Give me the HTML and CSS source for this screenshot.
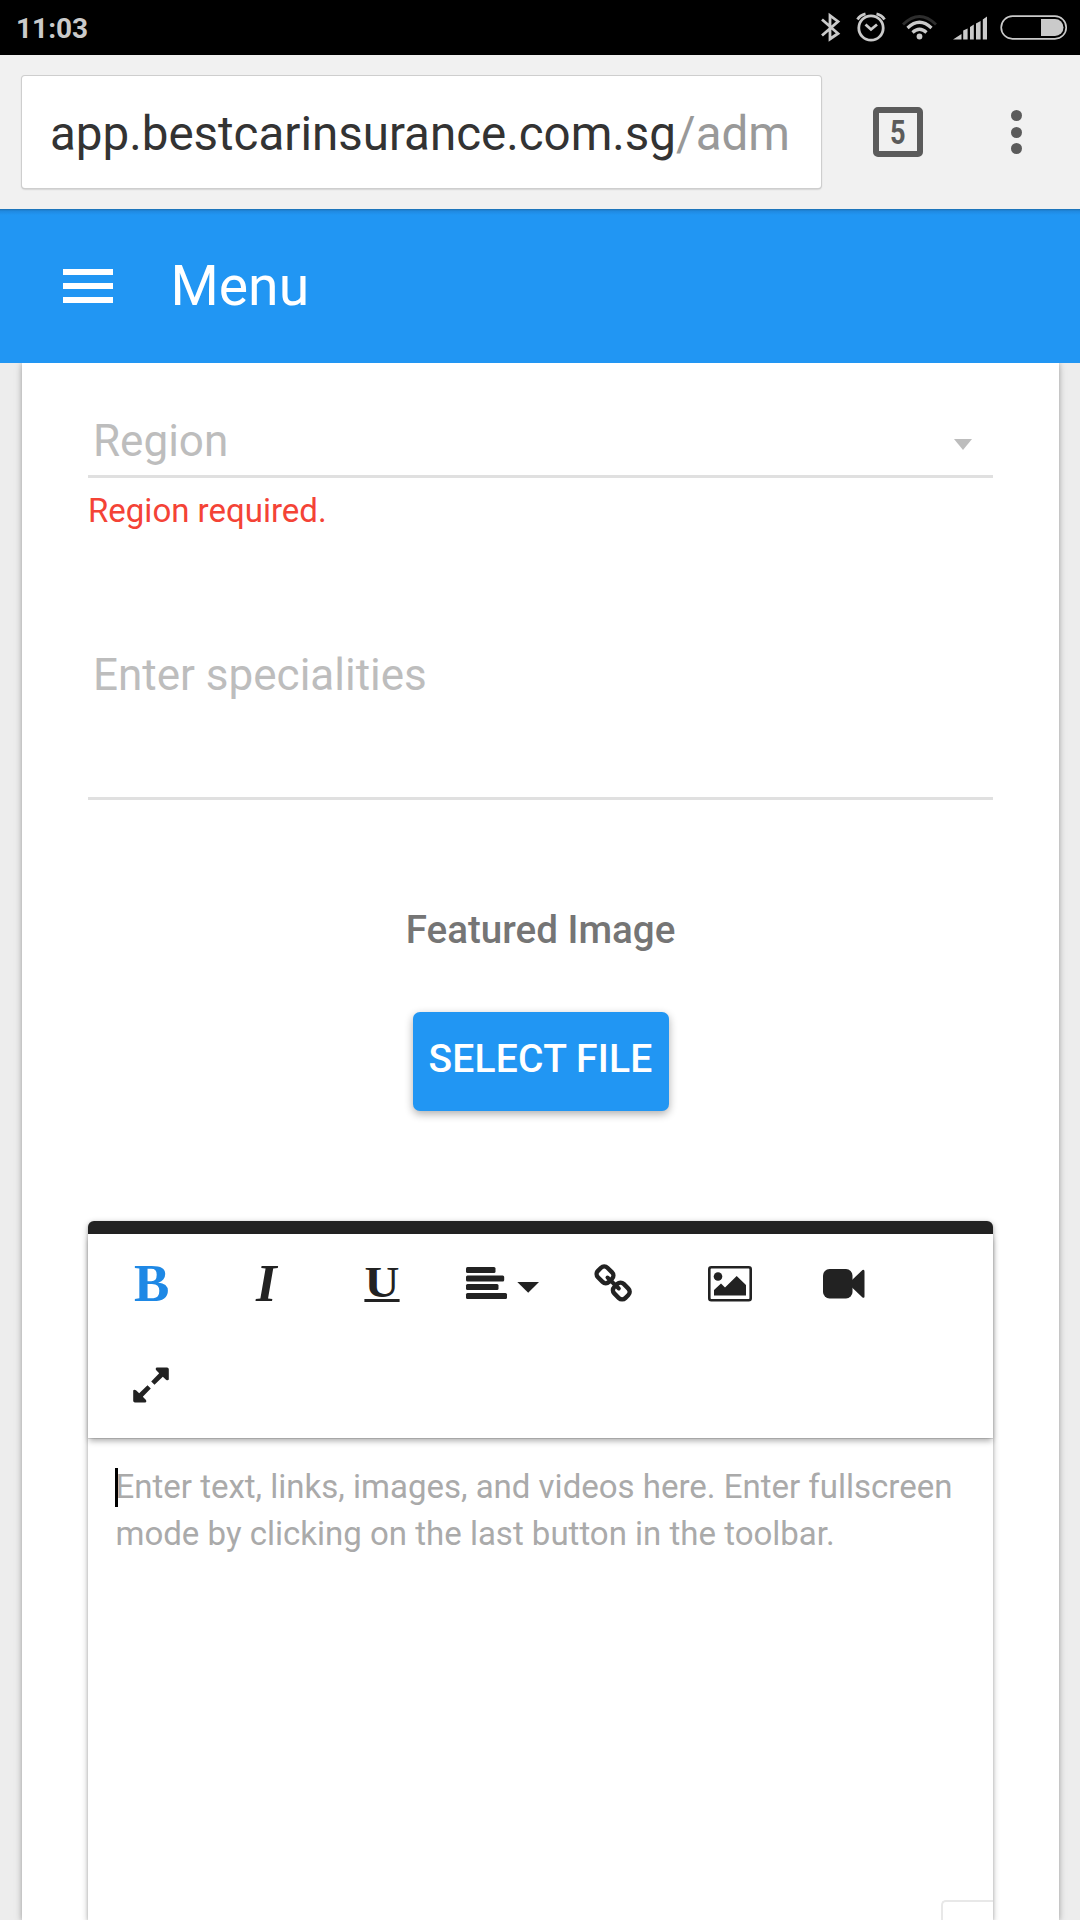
FILE: index.html
```html
<!DOCTYPE html>
<html lang="en">
<head>
<meta charset="utf-8">
<title>Menu</title>
<link rel="stylesheet" href="styles.css">
</head>
<body>
<div class="status">
  <span class="clock">11:03</span>
  <svg class="status-icons" width="260" height="55" viewBox="820 0 260 55" fill="none" stroke="#cacaca">
    <path stroke-width="2.800" d="M822 19.500L838 33.500L830 39V15.500L838 21.500L822 35.500"/>
    <circle cx="871" cy="28" r="12.200" stroke-width="2.800"/>
    <path stroke-width="2.800" d="M865.500 24.500L871 29.500L877 24.500M857.500 19.500Q860 15 865.500 13.800M876.500 13.800Q882 15 884.500 19.500"/>
    <path stroke="#2d2d2d" stroke-width="2.800" d="M903 24.500Q919.500 8.500 936 24.500"/>
    <path stroke-width="3.200" d="M907.500 28Q919.500 16.500 931.500 28M912.500 32.500Q919.500 26 926.500 32.500"/>
    <circle cx="919.500" cy="36.500" r="2.900" fill="#cacaca" stroke="none"/>
    <path fill="#cacaca" stroke="none" d="M953 39.500L961.500 34V39.500ZM963.200 30.500L967.600 28.500V39.500H963.200ZM970 27L973.800 24.500V39.500H970ZM976 23.500L980.600 21V39.500H976ZM982.800 19.500L987 16.500V39.500H982.800Z"/>
    <rect x="1001.200" y="16.200" width="65" height="22.600" rx="11.300" stroke-width="1.700"/>
    <path fill="#cacaca" stroke="none" d="M1041 19H1055A8.500 8.500 0 0 1 1055 36H1041Z"/>
  </svg>
</div>
<div class="browser">
  <div class="url"><span>app.bestcarinsurance.com.sg</span><span class="path">/adm</span></div>
  <div class="tabs"><span>5</span></div>
  <div class="dots"><i></i><i></i><i></i></div>
</div>
<header class="appbar">
  <div class="burger"><i></i><i></i><i></i></div>
  <h1>Menu</h1>
</header>
<main class="card">
  <div class="select"><span>Region</span><i class="caret"></i></div>
  <p class="error">Region required.</p>
  <div class="textarea">Enter specialities</div>
  <h2>Featured Image</h2>
  <button class="file">SELECT FILE</button>
  <section class="editor">
    <div class="toolbar">
      <span class="tool bold">B</span>
      <span class="tool italic">I</span>
      <span class="tool underline"><span>U</span></span>
      <span class="tool align"><svg width="76" height="36" viewBox="0 0 76 36"><g fill="#222"><rect x="2" y="1" width="29.500" height="6" rx="1.500"/><rect x="2" y="9.500" width="38.200" height="6" rx="1.500"/><rect x="2" y="18" width="32.500" height="6" rx="1.500"/><rect x="2" y="27" width="41" height="6" rx="1.500"/><path d="M53.300 16H75L64.200 26.800Z"/></g></svg></span>
      <span class="tool"><svg width="38" height="40" viewBox="594 1263 38 40" fill="none" stroke="#222"><rect x="-6.700" y="-7.800" width="13.400" height="15.600" rx="4.500" stroke-width="4.400" transform="translate(605 1273.800) rotate(-45)"/><rect x="-6.700" y="-7.800" width="13.400" height="15.600" rx="4.500" stroke-width="4.400" transform="translate(621.300 1290) rotate(-45)"/><path d="M607.500 1276.500L618.800 1287.500" stroke-width="4" stroke-linecap="round"/></svg></span>
      <span class="tool image"><svg width="44" height="36" viewBox="0 0 44 36"><rect x="1.300" y="1.300" width="41.400" height="33" rx="2" fill="none" stroke="#222" stroke-width="2.600"/><circle cx="10" cy="10.500" r="4.300" fill="#222"/><path fill="#222" d="M6 29.500V24L13 17.500L17 21.500L28.700 10L38 19V29.500Z"/></svg></span>
      <span class="tool"><svg width="42" height="30" viewBox="0 0 42 30" fill="#222"><rect width="29.500" height="29.500" rx="6.500"/><path d="M29 11L39.500 1Q41.500 0 41.500 2.500V27.500Q41.500 29.500 39.500 28.500L29 18.500Z"/></svg></span>
      <span class="tool"><svg width="36" height="36" viewBox="0 0 36 36" fill="#222"><path d="M23.500 .5H34Q35.800 .5 35.800 2.300V12.500Q35 14 33 12.800L29.800 9.800L21.500 17.800L18.200 14.500L26.200 6.300L23 3Q22 1.500 23.500 .5ZM12.500 35.500H2Q.2 35.500 .2 33.700V23.500Q1 22 3 23.200L6.200 26.200L14.500 18.200L17.800 21.500L9.800 29.700L13 33Q14 34.500 12.500 35.500Z"/></svg></span>
    </div>
    <div class="content"><i class="cursor"></i>Enter text, links, images, and videos here. Enter fullscreen mode by clicking on the last button in the toolbar.</div>
    <div class="counter"></div>
  </section>
</main>
</body>
</html>
```
FILE: styles.css
```css
* { box-sizing: border-box; margin: 0; padding: 0; }
html, body { width: 1080px; height: 1920px; overflow: hidden; }
body { background: #ededed; font-family: Roboto, sans-serif; display: flex; flex-direction: column; }

.status { height: 55px; flex: none; background: #000; display: flex; justify-content: space-between; padding-left: 16px; }
.clock { font-size: 28px; line-height: 57px; font-weight: 700; color: #cacaca; }

.browser { height: 154px; flex: none; background: #f1f1f1; padding: 21px 0 0 22px; display: flex; }
.url { width: 799px; height: 112px; background: #fff; border-radius: 3px; box-shadow: 0 0 0 1px #cecece, 0 1px 2px #999; padding-left: 28px; font-size: 47.5px; line-height: 116px; color: #333; white-space: nowrap; overflow: hidden; }
.path { color: #999; }
.tabs { width: 50px; height: 50px; margin: 31px 0 0 52px; border: 6px solid #5b5b5b; border-radius: 5px; color: #5b5b5b; text-align: center; font-size: 34px; font-weight: 700; line-height: 38px; }
.tabs span { display: inline-block; transform: scaleX(.8); }
.dots { margin: 34px 0 0 88px; display: flex; flex-direction: column; gap: 5.5px; }
.dots i { width: 11px; height: 11px; border-radius: 50%; background: #5b5b5b; }

.appbar { height: 154px; flex: none; background: linear-gradient(#1c6fb0 0, #2089e0 2px, #2196f3 6px); display: flex; padding: 60px 0 0 63px; position: relative; z-index: 1; }
.burger { width: 50px; display: flex; flex-direction: column; gap: 8px; }
.burger i { height: 6px; background: #fff; }
h1 { margin-left: 57.5px; font-size: 55.3px; font-weight: 400; line-height: 36px; color: #fff; }

.card { flex: 1; min-height: 0; width: 1037px; margin-left: 22px; padding: 42px 66px 0; background: #fff; box-shadow: 0 0 5px rgba(0,0,0,.25), 0 2px 9px rgba(0,0,0,.14); display: flex; flex-direction: column; }
.card > * { flex-shrink: 0; }
.select { height: 73px; border-bottom: 3px solid #e0e0e0; padding: 0 21px 0 5px; display: flex; justify-content: space-between; font-size: 44px; line-height: 72px; color: #bdbdbd; }
.caret { width: 18px; height: 11px; margin-top: 34px; background: #bdbdbd; clip-path: polygon(0 0, 100% 0, 50% 100%); }
.error { height: 66px; font-size: 33px; line-height: 66px; color: #f44336; }
.textarea { height: 256px; border-bottom: 3px solid #e0e0e0; padding: 101px 0 0 5px; font-size: 44px; line-height: 60px; color: #bdbdbd; }
h2 { margin-top: 97px; text-align: center; font-size: 38.6px; line-height: 66px; font-weight: 500; color: #757575; }
.file { align-self: center; width: 256px; height: 99px; margin: 49px 0 0; padding-bottom: 5px; border: 0; border-radius: 7px; background: #2196f3; color: #fff; font: 500 39px Roboto, sans-serif; letter-spacing: .2px; box-shadow: 0 3px 9px rgba(0,0,0,.32); white-space: nowrap; }

.editor { position: relative; flex: 1 0 0; margin-top: 110px; border-top: 13px solid #222; border-radius: 6px 6px 0 0; background: #fff; box-shadow: 0 2px 6px rgba(0,0,0,.3), 0 1px 3px rgba(0,0,0,.15); }
.toolbar { height: 204px; padding-left: 5px; display: grid; grid-template-columns: repeat(7, 115.5px); grid-template-rows: 99px 103px; box-shadow: 0 4px 6px -1px rgba(0,0,0,.32), 0 1px 0 rgba(0,0,0,.12); }
.tool { display: flex; align-items: center; justify-content: center; color: #222; font-family: "Liberation Serif", serif; font-weight: 700; }
.bold { color: #1e88e5; font-size: 53px; padding: 0 0 2px 2px; }
.italic { font-style: italic; font-size: 53px; padding-bottom: 2px; }
.underline span { width: 32px; height: 36px; border-bottom: 3px solid #222; font-size: 44px; line-height: 33px; text-align: center; transform: scaleX(1.1); }
.align { padding-left: 9px; }
.image { padding-left: 4px; }
.content { padding: 25px 27.5px 0; font-size: 33px; line-height: 47px; color: #aaa; }
.cursor { position: absolute; left: 27px; top: 234px; width: 3px; height: 39px; background: #000; }
.counter { position: absolute; right: 0; bottom: 0; width: 52px; height: 20px; border: 2px solid #e8e8e8; border-right: 0; border-bottom: 0; border-radius: 5px 0 0; }
```
